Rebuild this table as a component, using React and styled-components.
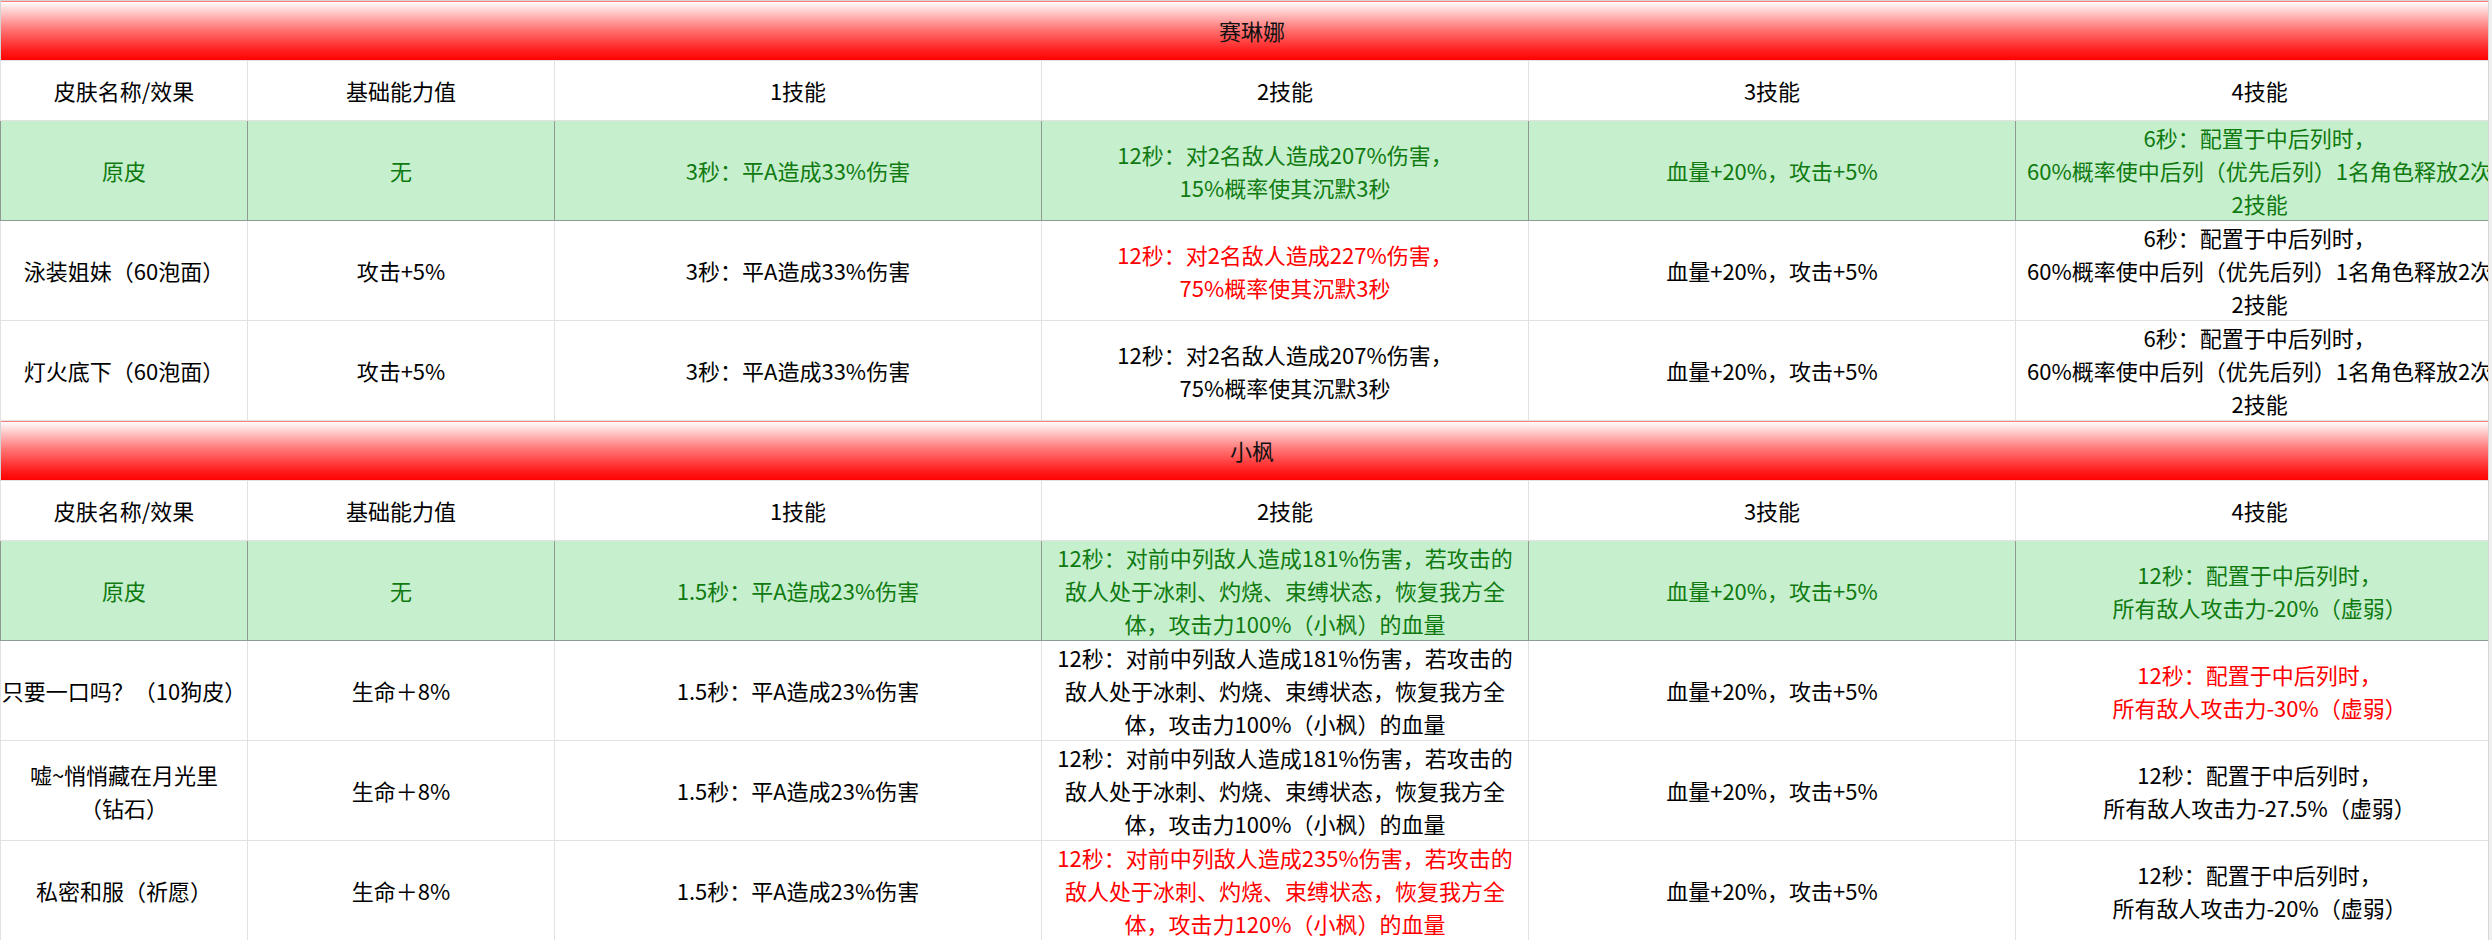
import styled, { createGlobalStyle } from 'styled-components';

const GlobalStyle = createGlobalStyle`
  html, body {
    margin: 0;
    padding: 0;
    background: #f0f0f0;
  }
  body {
    font-family: "Noto Sans CJK SC", "Microsoft YaHei", "Noto Sans", sans-serif;
  }
`

const Sheet = styled.div`
  width: 2488px;
  height: 940px;
  overflow: hidden;
  background: #fff;
  border-right: 1px solid #d6d6d6;
`
const Table = styled.table`
  width: 2503px;
  table-layout: fixed;
  border-collapse: collapse;
  font-size: 22px;
  line-height: 33px;
  color: #000;
`
const TitleCell = styled.td`
  height: 59px;
  padding: 0;
  text-align: center;
  vertical-align: middle;
  background: linear-gradient(to bottom, #ffffff 0%, #ff7a7a 45%, #ff1a1a 85%, #ff0000 100%);
  border: 1px solid #d4d4d4;
  border-bottom: none;
  color: #111;
`
const Row = styled.tr`
  height: ${p => p.$h}px;
  background: ${p => (p.$good ? '#c6efce' : '#fff')};
`
const Cell = styled.td`
  padding: 0;
  text-align: center;
  vertical-align: middle;
  white-space: pre;
  border: 1px solid ${p => (p.$good ? '#8f9a90' : '#e2e2e2')};
  color: ${p => (p.$tone === 'red' ? '#ff0000' : p.$tone === 'green' ? '#107a10' : '#000')};
`

const widths = [247, 307, 487, 487, 487, 488];
const heads = ['皮肤名称/效果', '基础能力值', '1技能', '2技能', '3技能', '4技能'];

const sections = [
  {
    name: '赛琳娜',
    rows: [
      {
        good: true,
        cells: ['原皮', '无', '3秒：平A造成33%伤害', '12秒：对2名敌人造成207%伤害，\n15%概率使其沉默3秒', '血量+20%，攻击+5%', '6秒：配置于中后列时，\n60%概率使中后列（优先后列）1名角色释放2次\n2技能'],
      },
      {
        red: [3],
        cells: ['泳装姐妹（60泡面）', '攻击+5%', '3秒：平A造成33%伤害', '12秒：对2名敌人造成227%伤害，\n75%概率使其沉默3秒', '血量+20%，攻击+5%', '6秒：配置于中后列时，\n60%概率使中后列（优先后列）1名角色释放2次\n2技能'],
      },
      {
        cells: ['灯火底下（60泡面）', '攻击+5%', '3秒：平A造成33%伤害', '12秒：对2名敌人造成207%伤害，\n75%概率使其沉默3秒', '血量+20%，攻击+5%', '6秒：配置于中后列时，\n60%概率使中后列（优先后列）1名角色释放2次\n2技能'],
      },
    ],
  },
  {
    name: '小枫',
    rows: [
      {
        good: true,
        cells: ['原皮', '无', '1.5秒：平A造成23%伤害', '12秒：对前中列敌人造成181%伤害，若攻击的\n敌人处于冰刺、灼烧、束缚状态，恢复我方全\n体，攻击力100%（小枫）的血量', '血量+20%，攻击+5%', '12秒：配置于中后列时，\n所有敌人攻击力-20%（虚弱）'],
      },
      {
        red: [5],
        cells: ['只要一口吗？（10狗皮）', '生命＋8%', '1.5秒：平A造成23%伤害', '12秒：对前中列敌人造成181%伤害，若攻击的\n敌人处于冰刺、灼烧、束缚状态，恢复我方全\n体，攻击力100%（小枫）的血量', '血量+20%，攻击+5%', '12秒：配置于中后列时，\n所有敌人攻击力-30%（虚弱）'],
      },
      {
        cells: ['嘘~悄悄藏在月光里\n（钻石）', '生命＋8%', '1.5秒：平A造成23%伤害', '12秒：对前中列敌人造成181%伤害，若攻击的\n敌人处于冰刺、灼烧、束缚状态，恢复我方全\n体，攻击力100%（小枫）的血量', '血量+20%，攻击+5%', '12秒：配置于中后列时，\n所有敌人攻击力-27.5%（虚弱）'],
      },
      {
        red: [3],
        cells: ['私密和服（祈愿）', '生命＋8%', '1.5秒：平A造成23%伤害', '12秒：对前中列敌人造成235%伤害，若攻击的\n敌人处于冰刺、灼烧、束缚状态，恢复我方全\n体，攻击力120%（小枫）的血量', '血量+20%，攻击+5%', '12秒：配置于中后列时，\n所有敌人攻击力-20%（虚弱）'],
      },
    ],
  },
];

function App() {
  return (
    <Sheet>
      <GlobalStyle />
      <Table>
        <colgroup>
          {widths.map((w, i) => <col key={i} style={{ width: w }} />)}
        </colgroup>
        <tbody>
          {sections.map(sec => [
            <tr key={sec.name + '-t'}>
              <TitleCell colSpan={6}>{sec.name}</TitleCell>
            </tr>,
            <Row key={sec.name + '-h'} $h={60}>
              {heads.map(h => <Cell key={h}>{h}</Cell>)}
            </Row>,
            ...sec.rows.map((r, ri) => (
              <Row key={sec.name + ri} $h={100} $good={r.good}>
                {r.cells.map((c, ci) => (
                  <Cell
                    key={ci}
                    $good={r.good}
                    $tone={r.good ? 'green' : r.red && r.red.includes(ci) ? 'red' : ''}
                  >{c}</Cell>
                ))}
              </Row>
            )),
          ])}
        </tbody>
      </Table>
    </Sheet>
  );
}

export default App;
